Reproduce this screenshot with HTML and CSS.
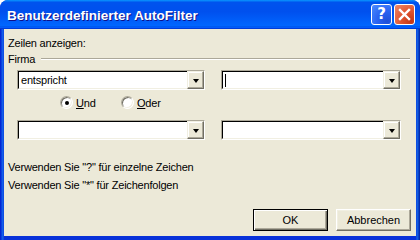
FILE: index.html
```html
<!DOCTYPE html>
<html lang="de">
<head>
  <meta charset="UTF-8">
  <title>Benutzerdefinierter AutoFilter</title>
  <link rel="stylesheet" href="styles.css">
</head>
<body>
  <div class="window">
    <div class="titlebar">
      <span class="title">Benutzerdefinierter AutoFilter</span>
      <div class="title-buttons">
        <span class="tbtn help">?</span>
        <span class="tbtn close">
          <svg width="13" height="13" viewBox="0 0 13 13">
            <path d="M2 2 L11 11 M11 2 L2 11" stroke="#fff" stroke-width="2.4" stroke-linecap="square"/>
          </svg>
        </span>
      </div>
    </div>

    <div class="content">
      <p class="caption">Zeilen anzeigen:</p>

      <div class="group">
        <span>Firma</span>
        <div class="group-line"></div>
      </div>

      <div class="row">
        <div class="combo"><span class="value">entspricht</span><span class="drop"></span></div>
        <div class="combo"><span class="value"><i class="cursor"></i></span><span class="drop"></span></div>
      </div>

      <div class="radios">
        <label class="radio und"><span class="dot checked"></span><span><u>U</u>nd</span></label>
        <label class="radio"><span class="dot"></span><span><u>O</u>der</span></label>
      </div>

      <div class="row">
        <div class="combo"><span class="value"></span><span class="drop"></span></div>
        <div class="combo"><span class="value"></span><span class="drop"></span></div>
      </div>

      <p class="hint first">Verwenden Sie "?" für einzelne Zeichen</p>
      <p class="hint">Verwenden Sie "*" für Zeichenfolgen</p>

      <div class="buttons">
        <button class="default">OK</button>
        <button>Abbrechen</button>
      </div>
    </div>
  </div>
</body>
</html>
```

FILE: styles.css
```css
html, body {
  margin: 0;
  background: #fff;
}

body {
  font-family: "Liberation Sans", Arial, sans-serif;
  font-size: 11px;
  letter-spacing: -0.2px;
  color: #000;
}

.window {
  width: 420px;
  height: 240px;
  display: flex;
  flex-direction: column;
  background: linear-gradient(90deg, #0019cf 0, #166aee 3px, #0831d9 4px, #0831d9 416px, #166aee 417px, #001ea0 420px);
  border-radius: 8px 8px 0 0;
  overflow: hidden;
}

/* Title bar */
.titlebar {
  height: 29px;
  display: flex;
  align-items: center;
  justify-content: space-between;
  padding: 0 5px 0 7px;
  background: linear-gradient(180deg, #0997ff 0, #0053ee 8%, #0050ee 40%, #0066ff 88%, #0055ea 93%, #005bff 95%, #003dd7 96%, #003dd7 100%);
  flex-shrink: 0;
}

.title {
  color: #fff;
  font-family: "Liberation Sans", Arial, sans-serif;
  font-weight: bold;
  font-size: 13.5px;
  letter-spacing: 0;
  text-shadow: 1px 1px #0f1089;
  padding-top: 1px;
}

.title-buttons {
  display: flex;
  gap: 2px;
}

.tbtn {
  width: 19px;
  height: 19px;
  border: 1px solid #fff;
  border-radius: 3px;
  display: flex;
  align-items: center;
  justify-content: center;
  color: #fff;
}

.help {
  background: radial-gradient(circle at 80% 85%, #1f4fd8 0, #2a63f2 45%, #4c8cff 100%);
  font-family: "DejaVu Sans", sans-serif;
  font-weight: bold;
  font-size: 15px;
  line-height: 19px;
}

.close {
  background: radial-gradient(circle at 85% 85%, #c43716 0, #e0542f 45%, #f08a6b 100%);
}

/* Client area */
.content {
  flex: 1;
  margin: 0 4px 4px 4px;
  background: #ece9d8;
  padding: 8px 0 0 4px;
}

.caption {
  margin: 0;
  height: 15px;
  line-height: 13px;
}

.group {
  display: flex;
  align-items: center;
  gap: 6px;
  height: 13px;
  margin-bottom: 5px;
}

.group-line {
  flex: 1;
  height: 0;
  border-top: 1px solid #aca899;
  border-bottom: 1px solid #fff;
  margin-right: 6px;
}

.row {
  display: grid;
  grid-template-columns: 188px 180px;
  gap: 16px;
  margin-left: 9px;
}

.combo {
  height: 20px;
  box-sizing: border-box;
  border: 1px solid;
  border-color: #aca899 #fff #fff #aca899;
  display: flex;
}

.combo .value {
  flex: 1;
  display: flex;
  align-items: center;
  background: #fff;
  border: 1px solid;
  border-color: #000 #f1efe2 #f1efe2 #000;
  padding-left: 2px;
  border-right: none;
}

.cursor {
  width: 1px;
  height: 13px;
  background: #000;
}

.drop {
  width: 17px;
  box-sizing: border-box;
  background: #ece9d8;
  border: 1px solid;
  border-color: #f1efe2 #716f64 #716f64 #f1efe2;
  box-shadow: inset -1px -1px #aca899, inset 1px 1px #fff;
  display: flex;
  align-items: center;
  justify-content: center;
}

.drop::after {
  content: "";
  border-left: 3.5px solid transparent;
  border-right: 3.5px solid transparent;
  border-top: 4px solid #000;
  margin-top: 1px;
}

.radios {
  display: flex;
  height: 30px;
  padding-left: 52px;
  align-items: flex-start;
  padding-top: 6px;
  box-sizing: border-box;
}

.radio {
  display: flex;
  align-items: center;
  gap: 3px;
}

.radio.und {
  width: 61px;
}

.radio u {
  text-decoration-thickness: 1px;
}

.dot {
  width: 11px;
  height: 11px;
  border-radius: 50%;
  border: 1px solid;
  border-color: #aca899 #fff #fff #aca899;
  background: #fff;
  box-shadow: inset 1px 1px #716f64, inset -1px -1px #f1efe2;
  display: flex;
  align-items: center;
  justify-content: center;
}

.dot.checked::after {
  content: "";
  width: 4px;
  height: 4px;
  border-radius: 50%;
  background: #000;
}

.hint {
  margin: 0;
  line-height: 13px;
  height: 18px;
}

.hint.first {
  margin-top: 21px;
}

.buttons {
  display: flex;
  justify-content: flex-end;
  gap: 8px;
  margin-top: 12px;
  padding-right: 5px;
}

button {
  width: 75px;
  height: 22px;
  font-family: "Liberation Sans", Arial, sans-serif;
  font-size: 11px;
  color: #000;
  background: #ece9d8;
  border: 1px solid;
  border-color: #fff #716f64 #716f64 #fff;
  box-shadow: inset -1px -1px #aca899, inset 1px 1px #f1efe2;
  padding: 0;
}

button.default {
  border: 1px solid #000;
  box-shadow: inset 1px 1px #fff, inset -1px -1px #716f64, inset -2px -2px #aca899;
}
```
